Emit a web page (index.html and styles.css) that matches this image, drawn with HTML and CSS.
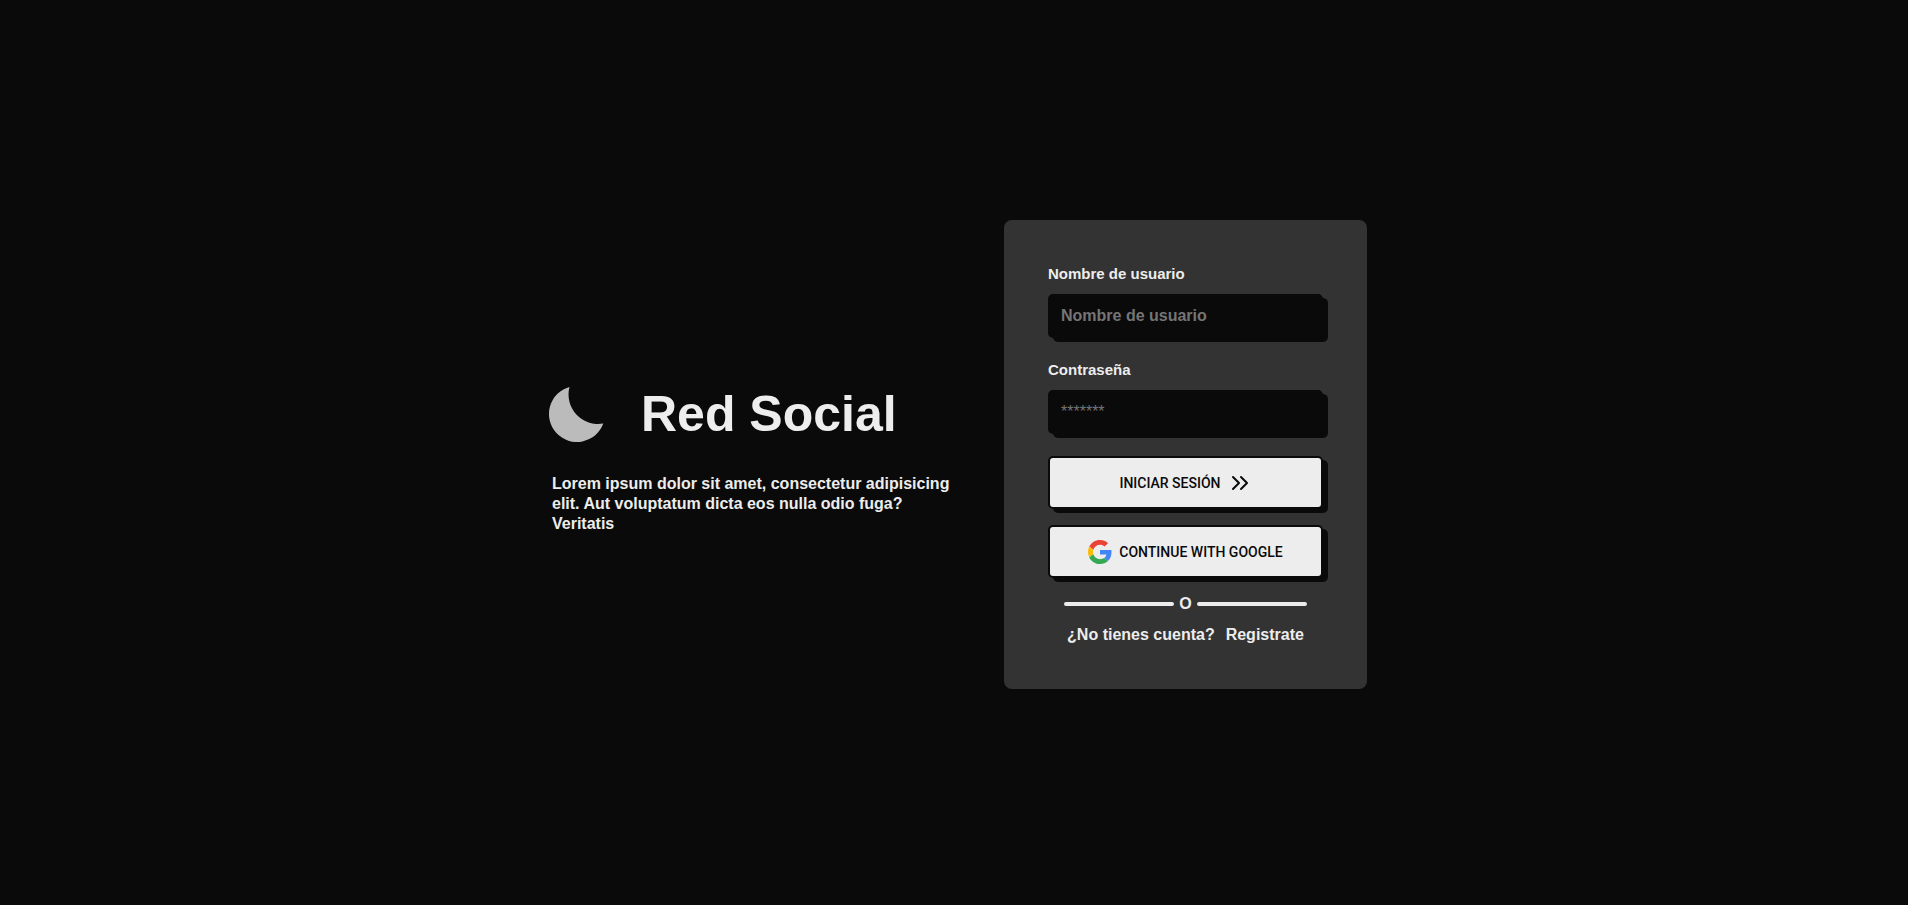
FILE: index.html
```
<!DOCTYPE html>
<html lang="es">
<head>
<meta charset="utf-8">
<title>Red Social</title>
<link rel="stylesheet" href="styles.css">
</head>
<body>
<main class="page">
  <section class="intro">
    <header class="brand">
      <svg class="brand-icon" viewBox="0 0 56 56" aria-hidden="true">
        <path d="M21.5 1A28 28 0 1 0 55.3 37.5A29.5 29.5 0 0 1 21.5 1Z" fill="#bbb"/>
      </svg>
      <h1 class="brand-name">Red Social</h1>
    </header>
    <p class="intro-text">Lorem ipsum dolor sit amet, consectetur adipisicing elit. Aut voluptatum dicta eos nulla odio fuga? Veritatis</p>
  </section>
  <form class="card">
    <div class="field">
      <label class="label" for="user">Nombre de usuario</label>
      <input class="input" id="user" type="text" placeholder="Nombre de usuario">
    </div>
    <div class="field">
      <label class="label" for="password">Contraseña</label>
      <input class="input input-password" id="password" type="password" placeholder="*******">
    </div>
    <div class="actions">
      <button class="button" type="submit">
        INICIAR SESIÓN
        <svg class="button-icon" viewBox="0 0 24 24" fill="none" stroke="#0a0a0a" stroke-width="2" stroke-linecap="round" stroke-linejoin="round" aria-hidden="true"><path d="M5 6L11 12L5 18M13 6L19 12L13 18"/></svg>
      </button>
      <button class="button" type="button">
        <svg class="button-icon" viewBox="0 0 48 48" aria-hidden="true">
          <path fill="#ea4335" d="M24 9.5c3.54 0 6.71 1.22 9.21 3.6l6.85-6.85C35.9 2.38 30.47 0 24 0 14.62 0 6.51 5.38 2.56 13.22l7.98 6.19C12.43 13.72 17.74 9.5 24 9.5z"/>
          <path fill="#4285f4" d="M46.98 24.55c0-1.57-.15-3.09-.38-4.55H24v9.02h12.94c-.58 2.96-2.26 5.48-4.78 7.18l7.73 6c4.51-4.18 7.09-10.36 7.09-17.65z"/>
          <path fill="#fbbc05" d="M10.53 28.59c-.48-1.45-.76-2.99-.76-4.59s.27-3.14.76-4.59l-7.98-6.19C.92 16.46 0 20.12 0 24c0 3.88.92 7.54 2.56 10.78l7.97-6.19z"/>
          <path fill="#34a853" d="M24 48c6.48 0 11.93-2.13 15.89-5.81l-7.73-6c-2.15 1.45-4.92 2.3-8.16 2.3-6.26 0-11.57-4.22-13.47-9.91l-7.98 6.19C6.51 42.62 14.62 48 24 48z"/>
        </svg>
        CONTINUE WITH GOOGLE
      </button>
      <div class="divider">O</div>
    </div>
    <p class="signup">¿No tienes cuenta? <a class="link" href="#">Registrate</a></p>
  </form>
</main>
</body>
</html>
```
FILE: styles.css
```
* {
  box-sizing: border-box;
}

body {
  margin: 0;
  background: #0a0a0a;
  color: #ededed;
  font: bold 16px/20px "Liberation Sans", Arial, sans-serif;
}

h1,
p {
  margin: 0;
}

.page {
  min-height: 100vh;
  padding-top: 4px;
  display: flex;
  justify-content: center;
  align-items: center;
  gap: 40px;
}

.intro {
  width: 423px;
  display: grid;
  gap: 22px;
}

.brand {
  display: flex;
  align-items: center;
  gap: 37px;
  padding-left: 7px;
}

.brand-icon {
  width: 56px;
  height: 56px;
  overflow: visible;
}

.brand-name {
  font-size: 50px;
  line-height: 76px;
}

.intro-text {
  padding-left: 11px;
}

.card {
  width: 363px;
  padding: 44px;
  border-radius: 8px;
  background: #333;
}

.field {
  display: grid;
  gap: 10px;
  margin-bottom: 22px;
}

.label {
  font-size: 15px;
}

.input {
  width: 100%;
  height: 44px;
  padding: 0 11px;
  border: 2px solid #0a0a0a;
  border-radius: 5px;
  background: #0a0a0a;
  box-shadow: 5px 4px #0a0a0a;
  color: #ededed;
  font: inherit;
}

.input::placeholder {
  color: #757575;
  opacity: 1;
}

.input-password {
  font-weight: normal;
}

.actions {
  display: grid;
  gap: 16px;
}

.button {
  display: flex;
  justify-content: center;
  align-items: center;
  gap: 7px;
  height: 53px;
  border: 2px solid #0a0a0a;
  border-radius: 5px;
  background: #ededed;
  box-shadow: 5px 4px #0a0a0a;
  color: #0a0a0a;
  font: 500 14px/20px Roboto, "Liberation Sans", sans-serif;
}

.button-icon {
  width: 24px;
  height: 24px;
}

.divider {
  display: flex;
  justify-content: center;
  align-items: center;
  gap: 5px;
}

.divider::before,
.divider::after {
  content: "";
  width: 110px;
  height: 4px;
  border-radius: 2px;
  background: #ededed;
}

.signup {
  display: flex;
  justify-content: center;
  gap: 11px;
  margin-top: 11px;
}

.link {
  color: inherit;
  text-decoration: none;
}
```
